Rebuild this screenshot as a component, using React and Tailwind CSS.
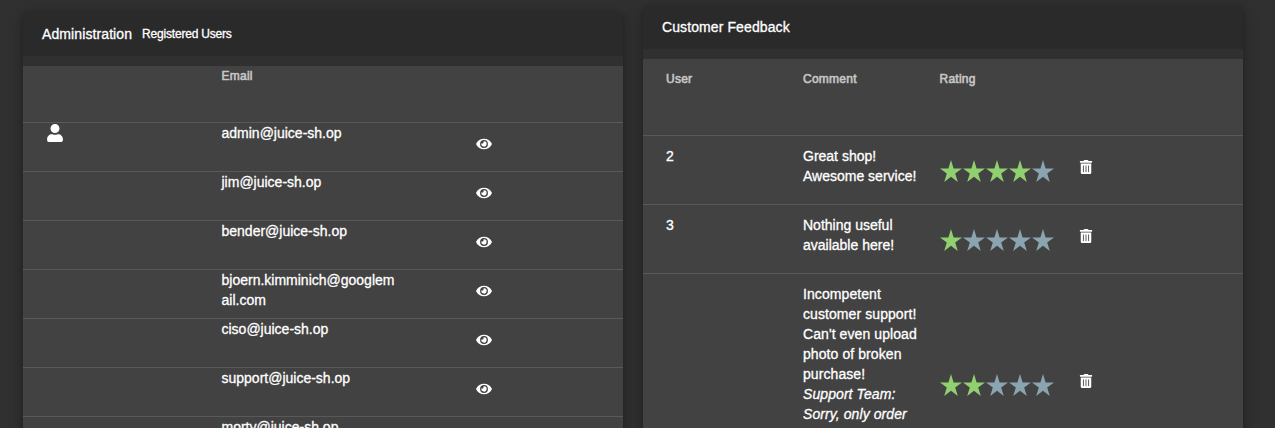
import { FaEye, FaTrashAlt, FaUser } from "react-icons/fa";

const users = [
  { email: "admin@juice-sh.op", icon: true },
  { email: "jim@juice-sh.op" },
  { email: "bender@juice-sh.op" },
  { email: "bjoern.kimminich@googlemail.com" },
  { email: "ciso@juice-sh.op" },
  { email: "support@juice-sh.op" },
  { email: "morty@juice-sh.op" },
];

const feedback = [
  { user: "2", comment: "Great shop! Awesome service!", rating: 4 },
  { user: "3", comment: "Nothing useful available here!", rating: 1 },
  {
    user: "",
    comment: "Incompetent customer support! Can't even upload photo of broken purchase!",
    reply: "Support Team: Sorry, only order",
    rating: 2,
  },
];

const card =
  "w-[600px] shrink-0 rounded-t bg-[#424242] shadow-[0_3px_5px_-1px_rgba(0,0,0,0.2),0_6px_10px_0_rgba(0,0,0,0.14),0_1px_18px_0_rgba(0,0,0,0.12)]";
const th = "text-xs leading-5 tracking-[0.25px] text-[#c6c6c6] [-webkit-text-stroke:0.6px_#c6c6c6]";

function Stars({ value }) {
  return (
    <div className="flex gap-px">
      {[1, 2, 3, 4, 5].map((n) => (
        <svg
          key={n}
          viewBox="0 0 22 22"
          className={n <= value ? "size-[22px] fill-[#91d070]" : "size-[22px] fill-[#8aa5af]"}
        >
          <path d="M11 0 13.6 8.4H22L15.2 13.6 17.8 22 11 16.8 4.2 22 6.8 13.6 0 8.4H8.4Z" />
        </svg>
      ))}
    </div>
  );
}

export default function App() {
  return (
    <div className="flex h-[428px] items-start gap-5 overflow-hidden bg-[#303030] pl-[23px] font-['Liberation_Sans',Arial,sans-serif] text-sm leading-5 text-white [-webkit-text-stroke:0.3px_white]">
      <section className={`${card} mt-[11px] h-[460px]`}>
        <h1 className="flex h-[45px] items-center rounded-t bg-[#2a2a2a] pl-[19px] tracking-[0.1px]">
          Administration
          <small className="ml-2.5 text-xs leading-5 tracking-[-0.2px]">Registered Users</small>
        </h1>
        <div className="h-2.5 bg-[#303030]" />
        <div className="flex h-[57px] border-b border-[#595959] pl-[198.5px]">
          <span className={th}>Email</span>
        </div>
        {users.map((u) => (
          <div key={u.email} className="flex h-[49px] border-b border-[#595959] pl-[23px]">
            <div className="w-[175.5px] pt-px">{u.icon && <FaUser size={18} />}</div>
            <div className="w-[176px] break-all">{u.email}</div>
            <FaEye size={16} className="ml-[78px] mt-3.5 h-[14px]" />
          </div>
        ))}
      </section>
      <section className={`${card} mt-[5px] h-[460px]`}>
        <h1 className="flex h-11 items-center rounded-t bg-[#2a2a2a] pl-[19px] tracking-[0.1px]">
          Customer Feedback
        </h1>
        <div className="h-2.5 bg-[#303030]" />
        <div className="flex h-[77px] border-b border-[#595959] pl-[23px] pt-2.5">
          <span className={`${th} w-[137px]`}>User</span>
          <span className={`${th} w-[136.5px]`}>Comment</span>
          <span className={th}>Rating</span>
        </div>
        {feedback.map((f) => (
          <div
            key={f.comment}
            className={`flex items-center border-b border-[#595959] pl-[23px] ${f.reply ? "h-[221px] tracking-[0.08px]" : "h-[69px]"}`}
          >
            <div className="w-[137px] self-start pt-2.5">{f.user}</div>
            <div className="w-[117px] self-start pt-2.5">
              {f.comment}
              {f.reply && <em className="block">{f.reply}</em>}
            </div>
            <div className="ml-5 mt-0.5 w-[139px]">
              <Stars value={f.rating} />
            </div>
            <FaTrashAlt size={14} className="-mt-1.5" />
          </div>
        ))}
      </section>
    </div>
  );
}
